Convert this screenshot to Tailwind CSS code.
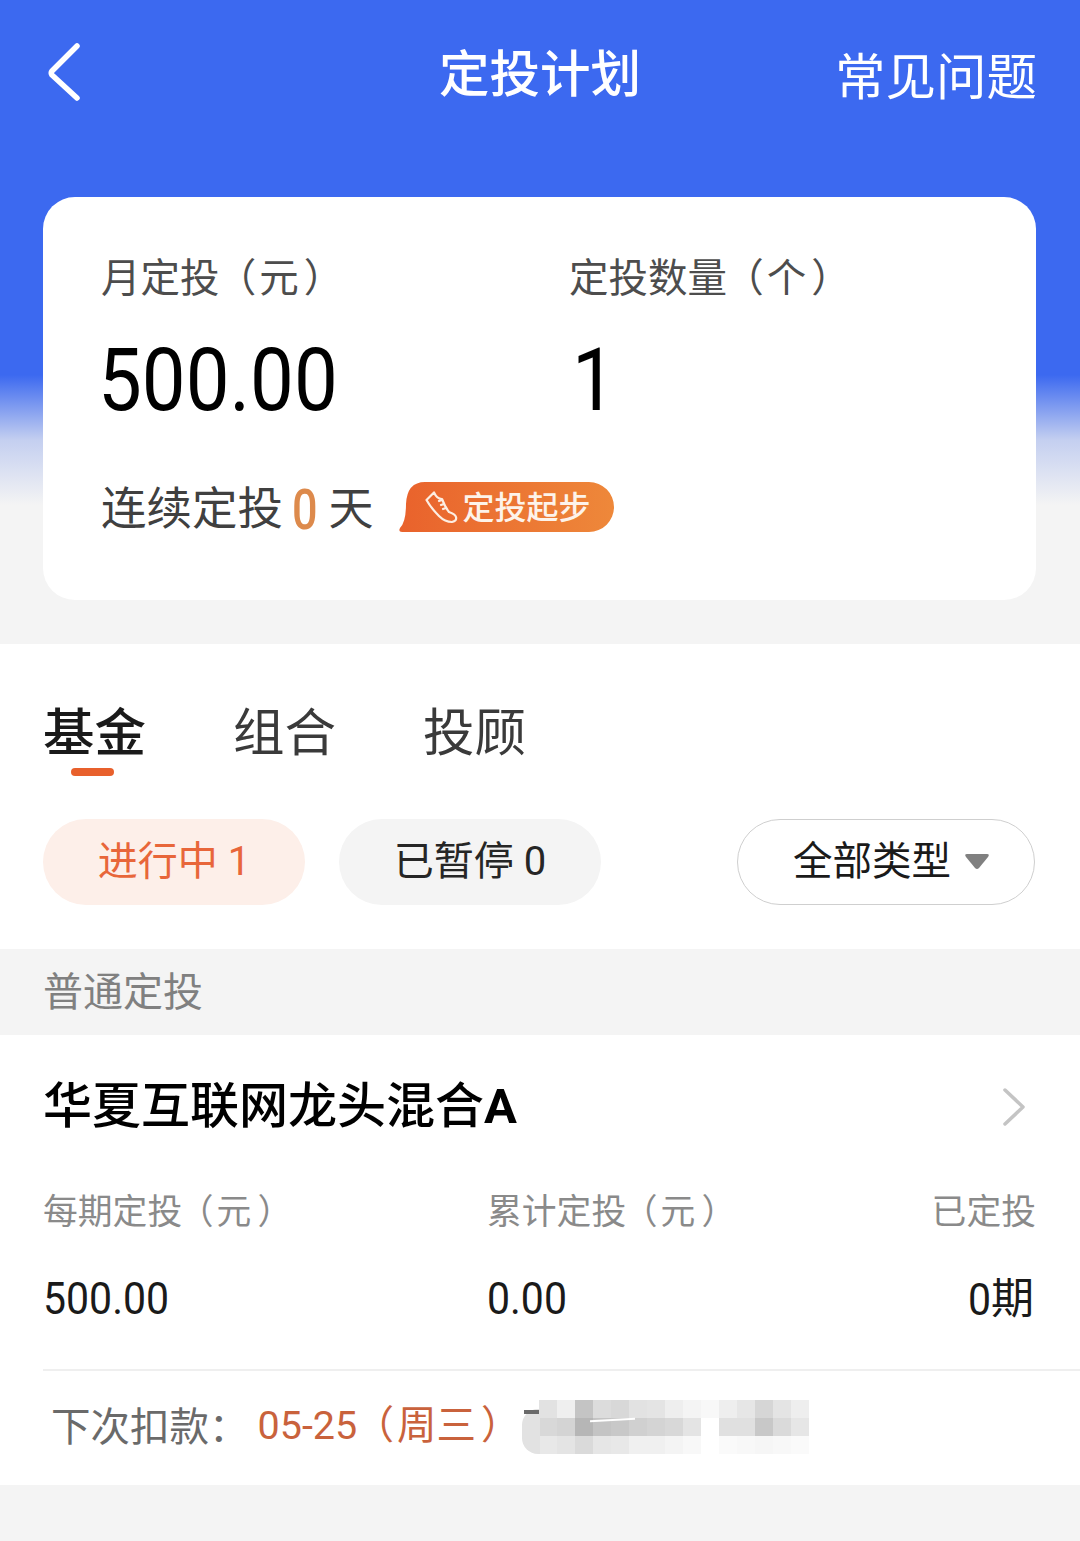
<!DOCTYPE html>
<html lang="zh">
<head>
<meta charset="utf-8">
<script src="https://cdn.jsdelivr.net/npm/@tailwindcss/browser@4"></script>
</head>
<body class="m-0">
<div class="relative w-[1080px] h-[1541px] overflow-hidden bg-[#f4f4f4] font-['Roboto','Noto_Sans_CJK_SC',sans-serif]">
  <!-- Hero -->
  <div class="h-[644px] bg-[linear-gradient(to_bottom,#3c69f0_0,#3c69f0_375px,#c4cff0_440px,#f4f4f4_505px)] pt-[44px] px-[44px]">
    <div class="relative flex items-center justify-between h-[64px]">
      <svg width="34" height="60" viewBox="0 0 34 60" class="ml-[3px] -mt-[6px]" fill="none" stroke="#fff" stroke-width="5.5" stroke-linecap="round" stroke-linejoin="round"><path d="M30 3 L5 28 Q3.500 30 5 32 L30 55"/></svg>
      <div class="absolute left-[396px] top-[1px] w-[200px] flex justify-center text-[50.5px] leading-[60px] font-medium text-white whitespace-nowrap">定投计划</div>
      <div class="mt-[4px] -mr-[1px] text-[50.5px] leading-[64px] text-white whitespace-nowrap">常见问题</div>
    </div>
    <div class="mt-[89px] -ml-px w-[993px] h-[403px] rounded-[32px] bg-white pl-[58px] pt-[58px]">
      <div class="flex">
        <div class="w-[468px]">
          <div class="text-[39.5px] leading-[48px] text-[#4d4d4d] whitespace-nowrap">月定投<span class="inline-block [font-feature-settings:'halt'] ml-[17px] mr-[3px]">（</span>元<span class="inline-block [font-feature-settings:'halt'] ml-[5px]">）</span></div>
          <div class="mt-[34px] -ml-[3px] text-[78px] leading-[88px] text-black scale-y-[1.115] origin-center">500.00</div>
        </div>
        <div>
          <div class="text-[39.5px] leading-[48px] text-[#4d4d4d] whitespace-nowrap">定投数量<span class="inline-block [font-feature-settings:'halt'] ml-[17px] mr-[3px]">（</span>个<span class="inline-block [font-feature-settings:'halt'] ml-[5px]">）</span></div>
          <div class="mt-[34px] pl-[3px] text-[78px] leading-[88px] text-black scale-y-[1.115] origin-center">1</div>
        </div>
      </div>
      <div class="mt-[55px] flex items-center h-[60px]">
        <span class="text-[45.5px] leading-[60px] text-[#404040] whitespace-nowrap">连续定投</span>
        <span class="ml-[9px] inline-block text-[45px] leading-[60px] font-medium text-[#dd8a4c] scale-y-[1.25]">0</span>
        <span class="ml-[11px] text-[45px] leading-[60px] text-[#404040]">天</span>
        <div class="relative ml-[25px] mt-[-6px] w-[215px] h-[50px]">
          <svg class="absolute left-0 top-0" width="215" height="50" viewBox="0 0 215 50"><defs><linearGradient id="g" x1="0" x2="1" y1="0" y2="0"><stop offset="0" stop-color="#e9622c"/><stop offset="1" stop-color="#ee883a"/></linearGradient></defs><path d="M26 0 H190 A25 25 0 0 1 190 50 H3 Q-1 50 1 46 Q7 40 7 22 Q8 0 26 0 Z" fill="url(#g)"/></svg>
          <svg class="absolute left-[26px] top-[9px]" width="33" height="33" viewBox="0 0 33 33" fill="none" stroke="#fdeee2" stroke-width="2.2" stroke-linejoin="round" stroke-linecap="round"><path d="M9 1.500 L1.500 9 Q6 17 14 25 Q20 31 27 31 Q32 30 31 26 Q30 23 24 21 Q20 16 17 8 Q12 8 9 1.500 Z"/><path d="M17 9 L14 10 M19 13 L16 14 M21 17 L18 18"/></svg>
          <div class="absolute left-[64px] top-[1px] text-[32px] leading-[50px] font-medium text-[#fdf3ea] whitespace-nowrap">定投起步</div>
        </div>
      </div>
    </div>
  </div>

  <!-- Tabs + filters -->
  <div class="h-[305px] bg-white px-[44px] pt-[60px]">
    <div class="flex gap-[88px] h-[72px]">
      <div class="relative w-[102px]">
        <div class="-ml-px text-[51.5px] leading-[60px] font-medium text-[#1a1a1a] whitespace-nowrap">基金</div>
        <div class="absolute left-[27px] top-[64px] w-[43px] h-[8px] rounded-full bg-[#e8602c]"></div>
      </div>
      <div class="-ml-px w-[102px] text-[51.5px] leading-[60px] text-[#3a3a3a] whitespace-nowrap">组合</div>
      <div class="w-[102px] text-[51.5px] leading-[60px] text-[#3a3a3a] whitespace-nowrap">投顾</div>
    </div>
    <div class="mt-[43px] -ml-px flex items-center">
      <div class="w-[262px] h-[86px] rounded-full bg-[#fdefe9] flex items-center justify-center text-[40px] text-[#e8663a] whitespace-nowrap">进行中 1</div>
      <div class="ml-[34px] w-[262px] h-[86px] rounded-full bg-[#f4f4f4] flex items-center justify-center text-[40px] text-[#262626] whitespace-nowrap">已暂停 0</div>
      <div class="ml-auto mr-[1px] w-[298px] h-[86px] rounded-full border border-[#cfcfcf] bg-white flex items-center pl-[55px] text-[39.5px] text-[#1a1a1a] whitespace-nowrap">
        全部类型
        <svg class="ml-[13px] -mt-[2px]" width="26" height="17" viewBox="0 0 26 17"><path d="M3 1 H23 Q26 1 24 4 L15 15 Q13 17 11 15 L2 4 Q0 1 3 1 Z" fill="#808080"/></svg>
      </div>
    </div>
  </div>

  <!-- Section label -->
  <div class="h-[86px] bg-[#f4f4f4] pl-[43px] pt-[2px] flex items-center text-[40px] text-[#808080] whitespace-nowrap">普通定投</div>

  <!-- Item -->
  <div class="relative h-[450px] bg-white pl-[43px] pt-[42px]">
    <div class="flex items-center justify-between pr-[54px] h-[60px]">
      <div class="text-[49px] leading-[60px] font-medium text-black whitespace-nowrap">华夏互联网龙头混合<span class="font-bold">A</span></div>
      <svg width="24" height="40" viewBox="0 0 24 40" fill="none" stroke="#c4c4c4" stroke-width="3.500" stroke-linecap="round" stroke-linejoin="round"><path d="M3 3 L21 20 L3 37"/></svg>
    </div>
    <div class="mt-[53px] flex pr-[44px] text-[34.8px] leading-[44px] text-[#8a8a8a] whitespace-nowrap">
      <div class="w-[444px]">每期定投<span class="inline-block [font-feature-settings:'halt'] ml-[14px] mr-[3px]">（</span>元<span class="inline-block [font-feature-settings:'halt'] ml-[6px]">）</span></div>
      <div>累计定投<span class="inline-block [font-feature-settings:'halt'] ml-[14px] mr-[3px]">（</span>元<span class="inline-block [font-feature-settings:'halt'] ml-[6px]">）</span></div>
      <div class="ml-auto">已定投</div>
    </div>
    <div class="mt-[40px] flex pr-[46px] text-[41px] leading-[50px] text-[#1a1a1a] whitespace-nowrap">
      <div class="w-[444px]"><span class="inline-block scale-y-[1.1]">500.00</span></div>
      <div><span class="inline-block scale-y-[1.1]">0.00</span></div>
      <div class="ml-auto"><span class="inline-block scale-y-[1.1]">0</span><span class="text-[43px]">期</span></div>
    </div>
    <div class="mt-[44px] h-[2px] bg-[#efefef]"></div>
    <div class="pl-[8px] mt-[30px] flex items-center h-[50px] text-[39.5px] leading-[50px] whitespace-nowrap">
      <span class="text-[#6a6a6a]">下次扣款<span class="font-['Noto_Sans_CJK_TC',sans-serif]">：</span></span><span class="ml-[9px] text-[#c9623c]">05-25<span class="inline-block [font-feature-settings:'halt'] ml-[17px] mr-[3px]">（</span>周三<span class="inline-block [font-feature-settings:'halt'] ml-[5px]">）</span></span>
    </div>
    <!-- Blurred (redacted) text -->
    <div class="absolute left-[539px] top-[365px] grid grid-cols-[repeat(15,18px)] grid-rows-[18px_18px_18px]">
      <div class="bg-[#e2e2e2]"></div><div class="bg-[#efefef]"></div><div class="bg-[#c4c4c4]"></div><div class="bg-[#dcdcdc]"></div><div class="bg-[#d8d8d8]"></div><div class="bg-[#e2e2e2]"></div><div class="bg-[#e4e4e4]"></div><div class="bg-[#eeeeee]"></div><div class="bg-[#f4f4f4]"></div><div class="bg-[#f8f8f8]"></div><div class="bg-[#eeeeee]"></div><div class="bg-[#e6e6e6]"></div><div class="bg-[#d6d6d6]"></div><div class="bg-[#e4e4e4]"></div><div class="bg-[#eeeeee]"></div>
      <div class="bg-[#d8d8d8]"></div><div class="bg-[#d4d4d4]"></div><div class="bg-[#b6b6b6]"></div><div class="bg-[#c4c4c4]"></div><div class="bg-[#c8c8c8]"></div><div class="bg-[#d0d0d0]"></div><div class="bg-[#d4d4d4]"></div><div class="bg-[#d8d8d8]"></div><div class="bg-[#e4e4e4]"></div><div class="bg-[#ffffff]"></div><div class="bg-[#e0e0e0]"></div><div class="bg-[#e0e0e0]"></div><div class="bg-[#c8c8c8]"></div><div class="bg-[#dadada]"></div><div class="bg-[#e6e6e6]"></div>
      <div class="bg-[#e8e8e8]"></div><div class="bg-[#e4e4e4]"></div><div class="bg-[#dadada]"></div><div class="bg-[#e6e6e6]"></div><div class="bg-[#e8e8e8]"></div><div class="bg-[#f0f0f0]"></div><div class="bg-[#f0f0f0]"></div><div class="bg-[#f4f4f4]"></div><div class="bg-[#f8f8f8]"></div><div class="bg-[#ffffff]"></div><div class="bg-[#fafafa]"></div><div class="bg-[#f8f8f8]"></div><div class="bg-[#f6f6f6]"></div><div class="bg-[#f8f8f8]"></div><div class="bg-[#fafafa]"></div>
    </div>
    <div class="absolute left-[522px] top-[374px] w-[18px] h-[45px] rounded-l-[16px] bg-[#e2e2e2]"></div>
    <div class="absolute left-[524px] top-[375px] w-[15px] h-[4px] bg-[#6a6a6a]"></div>
    <div class="absolute left-[590px] top-[384px] w-[45px] h-[2px] -rotate-3 bg-white"></div>
  </div>
</div>
</body>
</html>
